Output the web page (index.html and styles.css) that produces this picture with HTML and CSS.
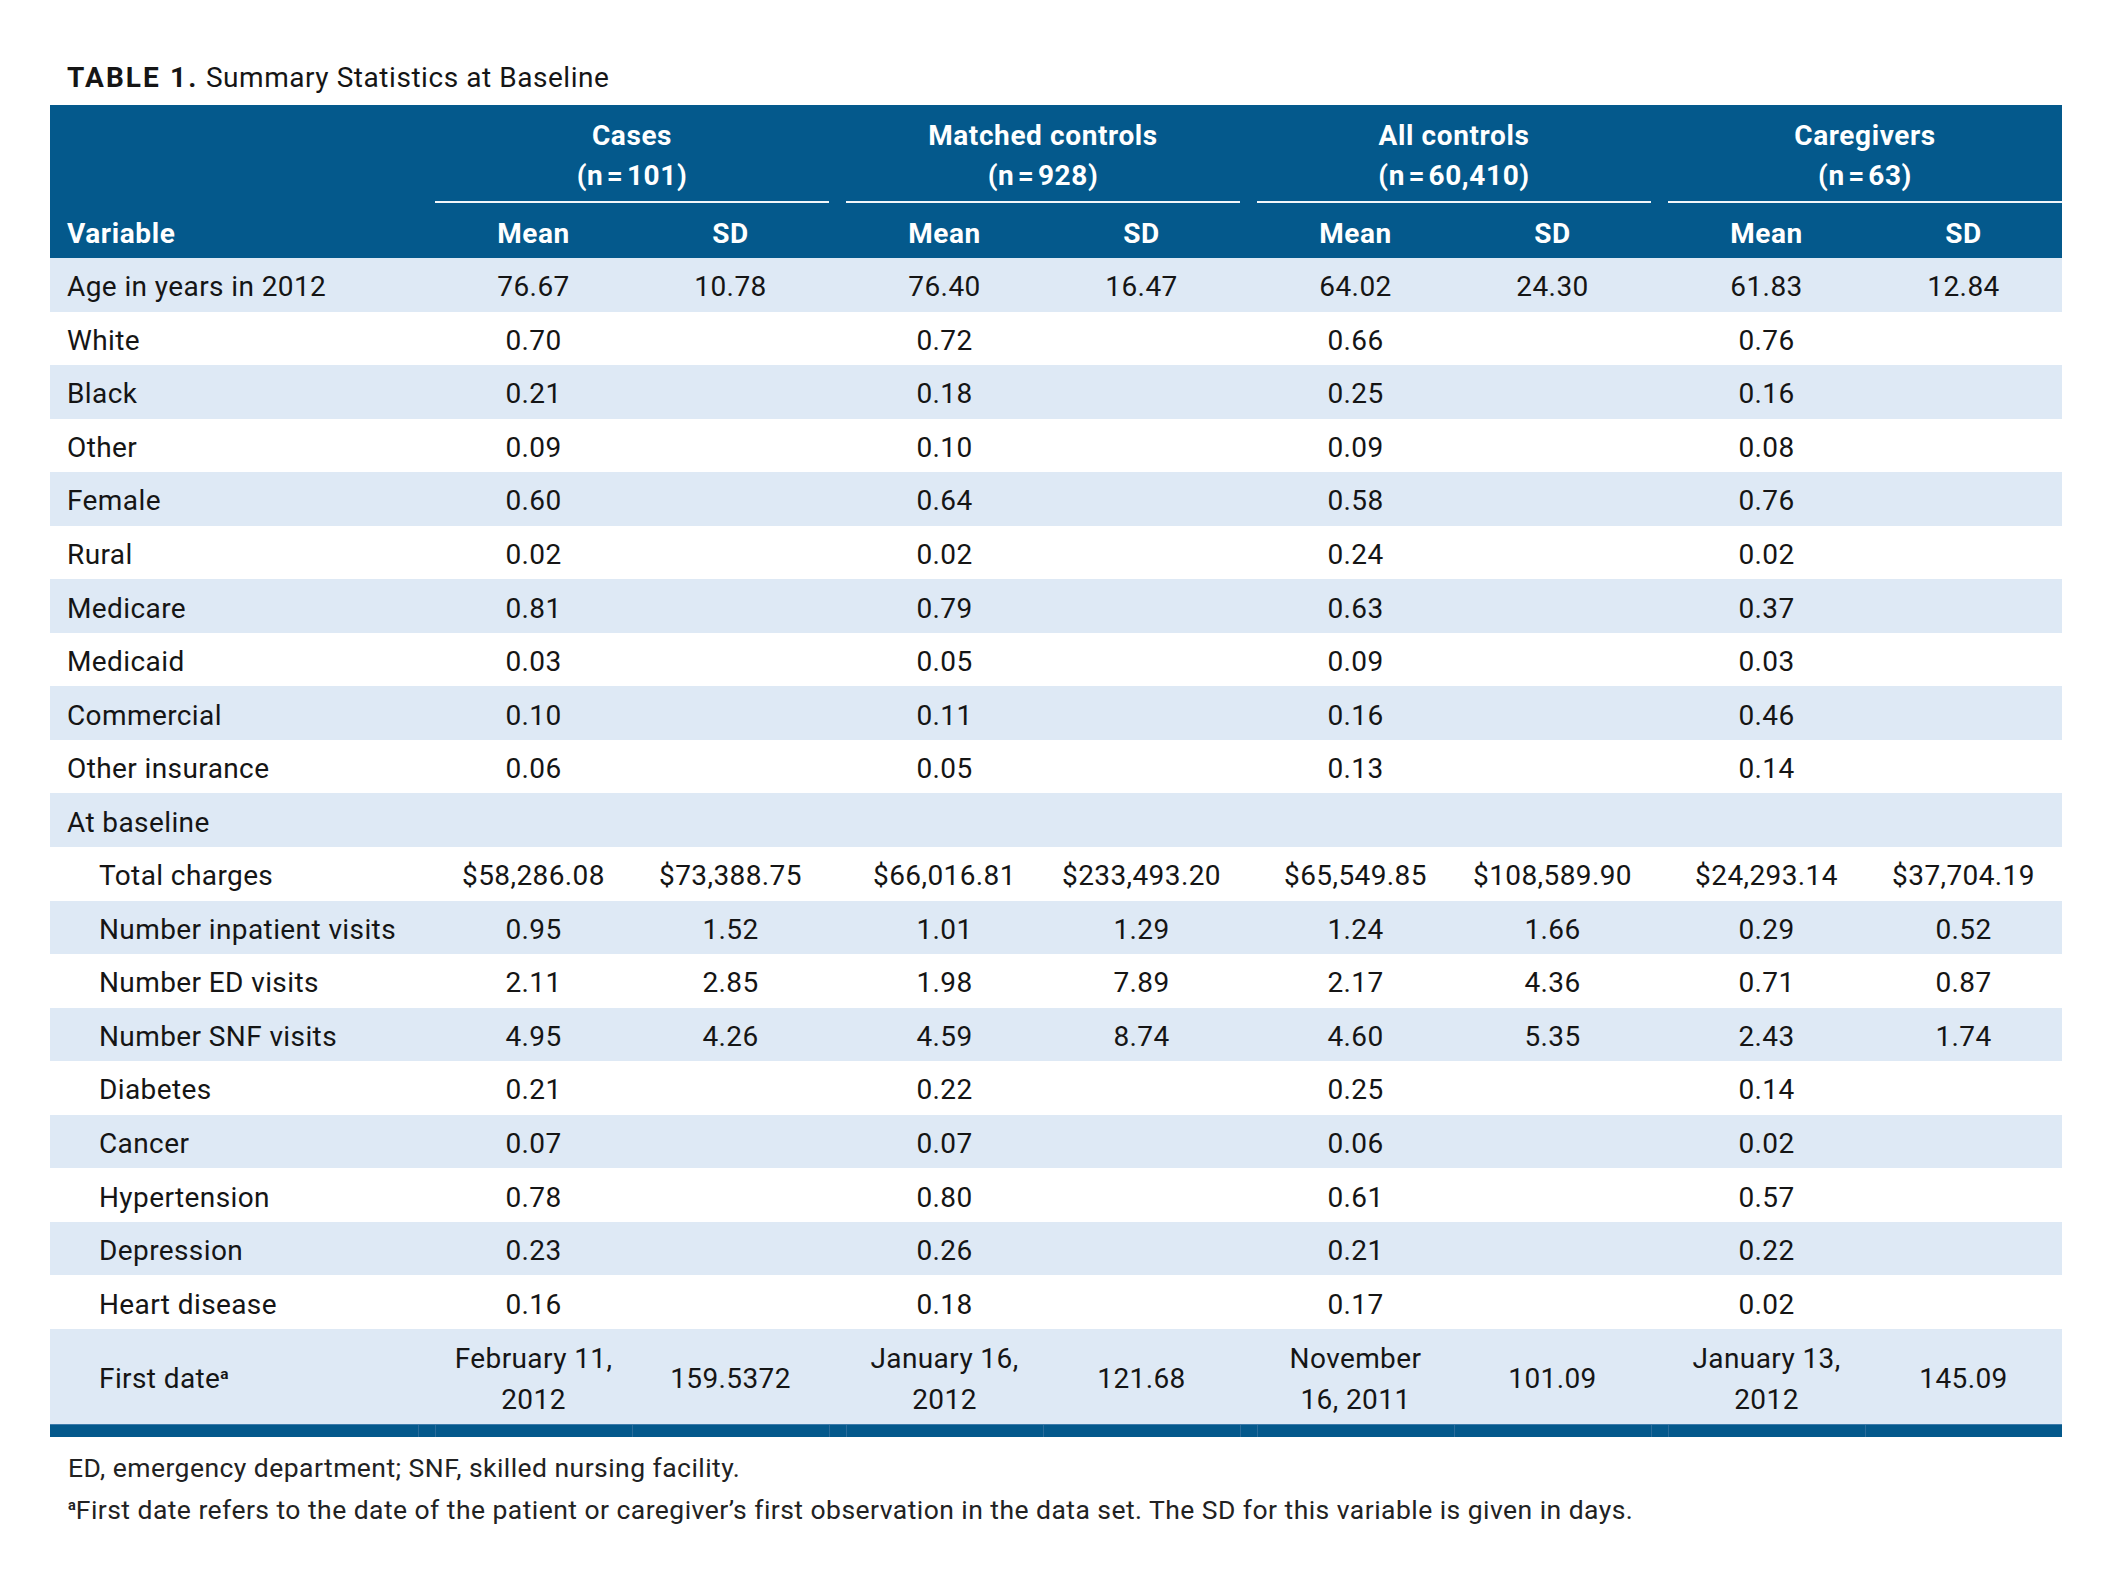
FILE: index.html
```html
<!DOCTYPE html>
<html lang="en">
<head>
<meta charset="utf-8">
<title>Table 1. Summary Statistics at Baseline</title>
<link rel="stylesheet" href="styles.css">
</head>
<body>
<div class="page">
  <h2 class="title"><b>TABLE 1.</b> Summary Statistics at Baseline</h2>
  <table class="stats">
    <colgroup>
      <col class="c-var">
      <col class="c-sp"><col class="c-num"><col class="c-num">
      <col class="c-sp"><col class="c-num"><col class="c-num">
      <col class="c-sp"><col class="c-num"><col class="c-num">
      <col class="c-sp"><col class="c-num"><col class="c-num">
    </colgroup>
    <thead>
      <tr class="r1">
        <th></th>
        <th></th><th class="grp" colspan="2">Cases<br>(n&#8202;=&#8202;101)</th>
        <th></th><th class="grp" colspan="2">Matched controls<br>(n&#8202;=&#8202;928)</th>
        <th></th><th class="grp" colspan="2">All controls<br>(n&#8202;=&#8202;60,410)</th>
        <th></th><th class="grp" colspan="2">Caregivers<br>(n&#8202;=&#8202;63)</th>
      </tr>
      <tr class="r2">
        <th class="var">Variable</th>
        <th></th><th>Mean</th><th>SD</th>
        <th></th><th>Mean</th><th>SD</th>
        <th></th><th>Mean</th><th>SD</th>
        <th></th><th>Mean</th><th>SD</th>
      </tr>
    </thead>
    <tbody>
      <tr><td class="lbl">Age in years in 2012</td><td></td><td>76.67</td><td>10.78</td><td></td><td>76.40</td><td>16.47</td><td></td><td>64.02</td><td>24.30</td><td></td><td>61.83</td><td>12.84</td></tr>
      <tr><td class="lbl">White</td><td></td><td>0.70</td><td></td><td></td><td>0.72</td><td></td><td></td><td>0.66</td><td></td><td></td><td>0.76</td><td></td></tr>
      <tr><td class="lbl">Black</td><td></td><td>0.21</td><td></td><td></td><td>0.18</td><td></td><td></td><td>0.25</td><td></td><td></td><td>0.16</td><td></td></tr>
      <tr><td class="lbl">Other</td><td></td><td>0.09</td><td></td><td></td><td>0.10</td><td></td><td></td><td>0.09</td><td></td><td></td><td>0.08</td><td></td></tr>
      <tr><td class="lbl">Female</td><td></td><td>0.60</td><td></td><td></td><td>0.64</td><td></td><td></td><td>0.58</td><td></td><td></td><td>0.76</td><td></td></tr>
      <tr><td class="lbl">Rural</td><td></td><td>0.02</td><td></td><td></td><td>0.02</td><td></td><td></td><td>0.24</td><td></td><td></td><td>0.02</td><td></td></tr>
      <tr><td class="lbl">Medicare</td><td></td><td>0.81</td><td></td><td></td><td>0.79</td><td></td><td></td><td>0.63</td><td></td><td></td><td>0.37</td><td></td></tr>
      <tr><td class="lbl">Medicaid</td><td></td><td>0.03</td><td></td><td></td><td>0.05</td><td></td><td></td><td>0.09</td><td></td><td></td><td>0.03</td><td></td></tr>
      <tr><td class="lbl">Commercial</td><td></td><td>0.10</td><td></td><td></td><td>0.11</td><td></td><td></td><td>0.16</td><td></td><td></td><td>0.46</td><td></td></tr>
      <tr><td class="lbl">Other insurance</td><td></td><td>0.06</td><td></td><td></td><td>0.05</td><td></td><td></td><td>0.13</td><td></td><td></td><td>0.14</td><td></td></tr>
      <tr><td class="lbl">At baseline</td><td></td><td></td><td></td><td></td><td></td><td></td><td></td><td></td><td></td><td></td><td></td><td></td></tr>
      <tr><td class="lbl ind">Total charges</td><td></td><td>$58,286.08</td><td>$73,388.75</td><td></td><td>$66,016.81</td><td>$233,493.20</td><td></td><td>$65,549.85</td><td>$108,589.90</td><td></td><td>$24,293.14</td><td>$37,704.19</td></tr>
      <tr><td class="lbl ind">Number inpatient visits</td><td></td><td>0.95</td><td>1.52</td><td></td><td>1.01</td><td>1.29</td><td></td><td>1.24</td><td>1.66</td><td></td><td>0.29</td><td>0.52</td></tr>
      <tr><td class="lbl ind">Number ED visits</td><td></td><td>2.11</td><td>2.85</td><td></td><td>1.98</td><td>7.89</td><td></td><td>2.17</td><td>4.36</td><td></td><td>0.71</td><td>0.87</td></tr>
      <tr><td class="lbl ind">Number SNF visits</td><td></td><td>4.95</td><td>4.26</td><td></td><td>4.59</td><td>8.74</td><td></td><td>4.60</td><td>5.35</td><td></td><td>2.43</td><td>1.74</td></tr>
      <tr><td class="lbl ind">Diabetes</td><td></td><td>0.21</td><td></td><td></td><td>0.22</td><td></td><td></td><td>0.25</td><td></td><td></td><td>0.14</td><td></td></tr>
      <tr><td class="lbl ind">Cancer</td><td></td><td>0.07</td><td></td><td></td><td>0.07</td><td></td><td></td><td>0.06</td><td></td><td></td><td>0.02</td><td></td></tr>
      <tr><td class="lbl ind">Hypertension</td><td></td><td>0.78</td><td></td><td></td><td>0.80</td><td></td><td></td><td>0.61</td><td></td><td></td><td>0.57</td><td></td></tr>
      <tr><td class="lbl ind">Depression</td><td></td><td>0.23</td><td></td><td></td><td>0.26</td><td></td><td></td><td>0.21</td><td></td><td></td><td>0.22</td><td></td></tr>
      <tr><td class="lbl ind">Heart disease</td><td></td><td>0.16</td><td></td><td></td><td>0.18</td><td></td><td></td><td>0.17</td><td></td><td></td><td>0.02</td><td></td></tr>
      <tr class="fd"><td class="lbl ind">First date<sup>a</sup></td><td></td><td>February 11,<br>2012</td><td>159.5372</td><td></td><td>January 16,<br>2012</td><td>121.68</td><td></td><td>November<br>16, 2011</td><td>101.09</td><td></td><td>January 13,<br>2012</td><td>145.09</td></tr>
    </tbody>
    <tfoot>
      <tr><td></td><td></td><td></td><td></td><td></td><td></td><td></td><td></td><td></td><td></td><td></td><td></td><td></td></tr>
    </tfoot>
  </table>
  <div class="notes">
    <p>ED, emergency department; SNF, skilled nursing facility.</p>
    <p><sup>a</sup>First date refers to the date of the patient or caregiver’s first observation in the data set. The SD for this variable is given in days.</p>
  </div>
</div>
</body>
</html>
```

FILE: styles.css
```css
html, body {
  margin: 0;
  padding: 0;
  background: #ffffff;
}

body {
  font-family: Roboto, "Liberation Sans", sans-serif;
  color: #151515;
}

.page {
  width: 2012px;
  padding: 58px 0 0 50px;
}

.title {
  margin: 0 0 7px;
  padding-left: 17px;
  font-size: 28px;
  line-height: 40px;
  font-weight: 400;
  letter-spacing: 0.55px;
}

.title b {
  font-weight: 700;
  letter-spacing: 2.1px;
}

.stats {
  width: 2012px;
  table-layout: fixed;
  border-collapse: collapse;
  border-spacing: 0;
  font-size: 28px;
  letter-spacing: 0.4px;
}

.c-var { width: 368px; }
.c-sp { width: 17px; }
.c-num { width: 197px; }

.stats thead th {
  background: #04598c;
  color: #ffffff;
  font-weight: 700;
  letter-spacing: 0.6px;
  line-height: 40px;
  text-align: center;
  white-space: nowrap;
}

.r1 th {
  padding: 11px 0 5px;
}

.r1 th.grp {
  border-bottom: 2px solid #f2f6fa;
}

.r2 th {
  padding: 11px 0 4px;
}

.r2 th.var {
  text-align: left;
  padding-left: 17px;
}

.stats tbody td {
  height: 48.55px;
  padding: 5px 0 0;
  line-height: 40px;
  text-align: center;
  white-space: nowrap;
  vertical-align: middle;
}

.stats tbody tr:nth-child(odd) {
  background: #dee9f5;
}

.stats tbody td.lbl {
  text-align: left;
  padding-left: 17px;
}

.stats tbody td.ind {
  padding-left: 49px;
}

.stats tbody tr.fd td {
  height: 90px;
  line-height: 41px;
}

sup {
  font-size: 0.55em;
  font-weight: 700;
  line-height: 0;
  vertical-align: 0.6em;
  letter-spacing: 0;
}

.stats tfoot td {
  height: 12px;
  padding: 0;
  background: #04598c;
  border-top: 1px solid #3d7bab;
  border-left: 1px solid #2a6c9b;
}

.stats tfoot td:first-child {
  border-left: none;
}

.notes {
  padding: 10px 0 0 18px;
  font-size: 26.5px;
  letter-spacing: 0.45px;
  color: #222222;
}

.notes p {
  margin: 0;
  line-height: 42px;
}
```
